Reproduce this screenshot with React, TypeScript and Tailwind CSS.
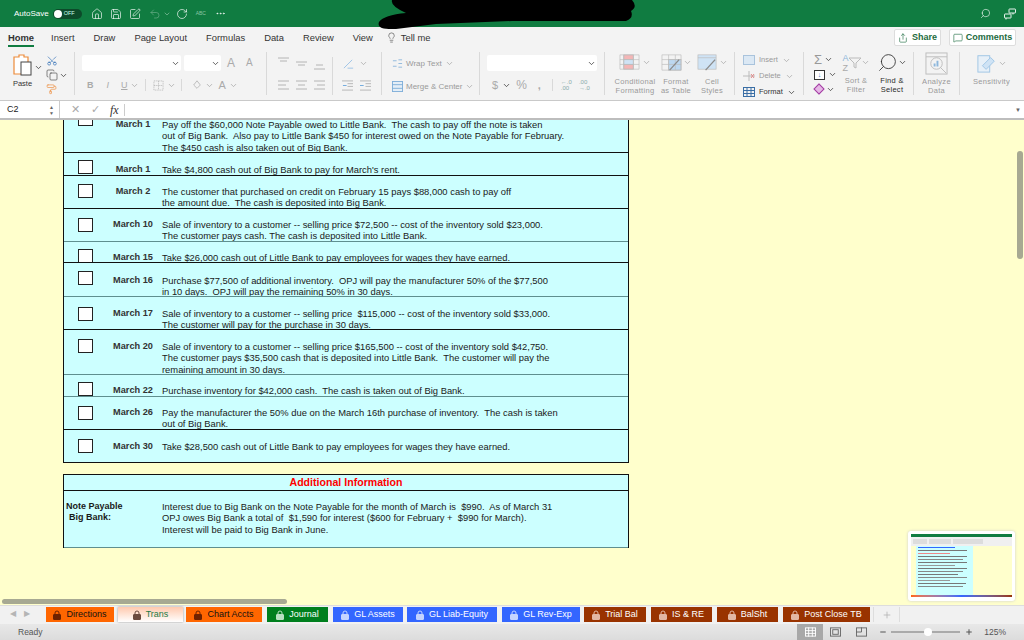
import {
    ChevronDown,
    Copy,
    Ellipsis,
    Home,
    Lightbulb,
    MessageSquare,
    Minus,
    PaintRoller,
    Plus,
    RotateCw,
    Save,
    Scissors,
    Search,
    Share,
    SquarePen,
    Undo2,
} from 'lucide-react';
import { ReactNode } from 'react';

const font = "font-['Liberation_Sans',Arial,sans-serif]";

type Row = {
    date: string;
    lines: string[];
    height: string;
    boxTop: string;
    textTop: string;
    rule: string;
};

const hard = 'border-[#111]';
const soft = 'border-[#5f8f8f]';

const rows: Row[] = [
    {
        date: 'March 1',
        lines: [
            'Pay off the $60,000 Note Payable owed to Little Bank.  The cash to pay off the note is taken',
            'out of Big Bank.  Also pay to Little Bank $450 for interest owed on the Note Payable for February.',
            'The $450 cash is also taken out of Big Bank.',
        ],
        height: 'h-[33px]',
        boxTop: 'mt-[-8px]',
        textTop: 'mt-[-1px]',
        rule: hard,
    },
    {
        date: 'March 1',
        lines: ["Take $4,800 cash out of Big Bank to pay for March's rent."],
        height: 'h-[23px]',
        boxTop: 'mt-[7px]',
        textTop: 'mt-[11px]',
        rule: hard,
    },
    {
        date: 'March 2',
        lines: [
            'The customer that purchased on credit on February 15 pays $88,000 cash to pay off',
            'the amount due.  The cash is deposited into Big Bank.',
        ],
        height: 'h-[33px]',
        boxTop: 'mt-[8px]',
        textTop: 'mt-[10px]',
        rule: hard,
    },
    {
        date: 'March 10',
        lines: [
            'Sale of inventory to a customer -- selling price $72,500 -- cost of the inventory sold $23,000.',
            'The customer pays cash. The cash is deposited into Little Bank.',
        ],
        height: 'h-[33px]',
        boxTop: 'mt-[9px]',
        textTop: 'mt-[10px]',
        rule: soft,
    },
    {
        date: 'March 15',
        lines: ['Take $26,000 cash out of Little Bank to pay employees for wages they have earned.'],
        height: 'h-[21px]',
        boxTop: 'mt-[7px]',
        textTop: 'mt-[10px]',
        rule: hard,
    },
    {
        date: 'March 16',
        lines: [
            'Purchase $77,500 of additional inventory.  OPJ will pay the manufacturer 50% of the $77,500',
            'in 10 days.  OPJ will pay the remaining 50% in 30 days.',
        ],
        height: 'h-[34px]',
        boxTop: 'mt-[8px]',
        textTop: 'mt-[12px]',
        rule: soft,
    },
    {
        date: 'March 17',
        lines: [
            'Sale of inventory to a customer -- selling price  $115,000 -- cost of the inventory sold $33,000.',
            'The customer will pay for the purchase in 30 days.',
        ],
        height: 'h-[33px]',
        boxTop: 'mt-[10px]',
        textTop: 'mt-[11px]',
        rule: hard,
    },
    {
        date: 'March 20',
        lines: [
            'Sale of inventory to a customer -- selling price $165,500 -- cost of the inventory sold $42,750.',
            'The customer pays $35,500 cash that is deposited into Little Bank.  The customer will pay the',
            'remaining amount in 30 days.',
        ],
        height: 'h-[45px]',
        boxTop: 'mt-[9px]',
        textTop: 'mt-[11px]',
        rule: soft,
    },
    {
        date: 'March 22',
        lines: ['Purchase inventory for $42,000 cash.  The cash is taken out of Big Bank.'],
        height: 'h-[22px]',
        boxTop: 'mt-[7px]',
        textTop: 'mt-[10px]',
        rule: soft,
    },
    {
        date: 'March 26',
        lines: [
            'Pay the manufacturer the 50% due on the March 16th purchase of inventory.  The cash is taken',
            'out of Big Bank.',
        ],
        height: 'h-[33px]',
        boxTop: 'mt-[9px]',
        textTop: 'mt-[10px]',
        rule: hard,
    },
    {
        date: 'March 30',
        lines: ['Take $28,500 cash out of Little Bank to pay employees for wages they have earned.'],
        height: 'h-[32px]',
        boxTop: 'mt-[9px]',
        textTop: 'mt-[11px]',
        rule: 'border-transparent',
    },
];

const tabs = [
    { name: 'Directions', width: 'w-[68px]', mr: 'mr-[4px]', cls: 'bg-[#ff6600] text-[#111]', lock: 'text-[#6e2200]' },
    { name: 'Trans', width: 'w-[65px]', mr: 'mr-[3px]', cls: 'bg-gradient-to-b from-[#ffc9ae] to-white text-[#1d7a45] shadow-[0_0_2px_#999]', lock: 'text-[#6b4a3e]' },
    { name: 'Chart Accts', width: 'w-[76px]', mr: 'mr-[5px]', cls: 'bg-[#ff6600] text-[#111]', lock: 'text-[#6e2200]' },
    { name: 'Journal', width: 'w-[61px]', mr: 'mr-[5px]', cls: 'bg-[#007f1e] text-white', lock: 'text-[#b9e0c2]' },
    { name: 'GL Assets', width: 'w-[70px]', mr: 'mr-[4px]', cls: 'bg-[#3366ff] text-white', lock: 'text-[#c4d3ff]' },
    { name: 'GL Liab-Equity', width: 'w-[90px]', mr: 'mr-[5px]', cls: 'bg-[#3366ff] text-white', lock: 'text-[#c4d3ff]' },
    { name: 'GL Rev-Exp', width: 'w-[78px]', mr: 'mr-[4px]', cls: 'bg-[#3366ff] text-white', lock: 'text-[#c4d3ff]' },
    { name: 'Trial Bal', width: 'w-[62px]', mr: 'mr-[5px]', cls: 'bg-[#993300] text-white', lock: 'text-[#e2b8a4]' },
    { name: 'IS & RE', width: 'w-[61px]', mr: 'mr-[5px]', cls: 'bg-[#993300] text-white', lock: 'text-[#e2b8a4]' },
    { name: 'BalSht', width: 'w-[61px]', mr: 'mr-[5px]', cls: 'bg-[#993300] text-white', lock: 'text-[#e2b8a4]' },
    { name: 'Post Close TB', width: 'w-[87px]', mr: 'mr-[3px]', cls: 'bg-[#993300] text-white', lock: 'text-[#e2b8a4]' },
];

const menu = ['Insert', 'Draw', 'Page Layout', 'Formulas', 'Data', 'Review', 'View'];

const overview = [
    'w-[70%] bg-[#3366ff]', 'w-[92%] bg-[#777]', 'w-[60%] bg-[#e88]', 'w-[92%] bg-[#777]', 'w-[85%] bg-[#888]',
    'w-[92%] bg-[#777]', 'w-[70%] bg-[#999]', 'w-[92%] bg-[#777]', 'w-[85%] bg-[#888]', 'w-[75%] bg-[#777]',
    'w-[92%] bg-[#888]', 'w-[60%] bg-[#999]', 'w-[90%] bg-[#777]', 'w-[85%] bg-[#888]',
];

function Caret({ dark = false, className = '' }: { dark?: boolean; className?: string }) {
    return (
        <ChevronDown
            className={`h-[9px] w-[9px] shrink-0 ${dark ? 'text-[#333]' : 'text-[#a5a5a5]'} ${className}`}
            strokeWidth={2}
        />
    );
}

function Lock({ className }: { className: string }) {
    return (
        <svg viewBox="0 0 8 10" className={`h-[10px] w-[8px] shrink-0 ${className}`} fill="none" stroke="currentColor">
            <path d="M2 5V3a2 2 0 0 1 4 0v2" />
            <rect x="0.5" y="4.5" width="7" height="5" rx="0.5" fill="currentColor" />
        </svg>
    );
}

function Lines({ align }: { align: 'left' | 'center' | 'right' | 'top' | 'middle' | 'bottom' }) {
    const paths: Record<string, string> = {
        left: 'M1 2h11M1 6h8M1 10h11',
        center: 'M1 2h11M3 6h7M1 10h11',
        right: 'M1 2h11M4 6h8M1 10h11',
        top: 'M1 1h11M3 4h7',
        middle: 'M1 5h11M3 8h7',
        bottom: 'M3 8h7M1 12h11',
    };
    return (
        <svg viewBox="0 0 13 13" className="h-[13px] w-[13px]" fill="none" stroke="#b4b4b4" strokeWidth="1">
            <path d={paths[align]} />
        </svg>
    );
}

function Label({ children, dark = false }: { children: ReactNode; dark?: boolean }) {
    return (
        <span className={`whitespace-nowrap text-center text-[7.5px] leading-[9px] tracking-[0.3px] ${dark ? 'text-[#2b2b2b]' : 'text-[#9a9a9a]'}`}>
            {children}
        </span>
    );
}

function Ribbon() {
    return (
        <div className="flex h-[49px] items-start pt-[1px]">
            {/* clipboard */}
            <div className="flex h-[43px] w-[75px] shrink-0 border-r border-[#d9d9d9] pt-[2px]">
                <div className="ml-[11px] flex w-[23px] flex-col items-center">
                    <svg viewBox="0 0 20 22" className="h-[22px] w-[20px]" fill="none">
                        <path d="M1 3h5V1h5v2h4v17H1z" fill="#fff" stroke="#ed8b3a" strokeWidth="1.2" />
                        <rect x="8" y="8" width="10" height="13" fill="#fff" stroke="#444" strokeWidth="1" />
                    </svg>
                    <span className="mt-[3px] text-[7.5px] leading-[9px] text-[#333]">Paste</span>
                </div>
                <Caret dark className="mt-[9px]" />
                <div className="ml-[3px] flex flex-col items-start gap-[3px] pt-[1px]">
                    <Scissors className="h-[12px] w-[12px] -rotate-90 text-[#2f6eb5]" strokeWidth={1.4} />
                    <div className="flex items-center gap-[1px]">
                        <Copy className="h-[12px] w-[12px] text-[#444]" strokeWidth={1.3} />
                        <Caret dark />
                    </div>
                    <PaintRoller className="h-[11px] w-[11px] text-[#ed8b3a]" strokeWidth={1.5} />
                </div>
            </div>
            {/* font */}
            <div className="flex h-[43px] w-[192px] shrink-0 flex-col gap-[8px] border-r border-[#d9d9d9] pl-[7px] pt-[3px]">
                <div className="flex items-center gap-[3px]">
                    <div className="flex h-[16px] w-[99px] items-center justify-end rounded-[2px] bg-white pr-[1px]">
                        <Caret dark />
                    </div>
                    <div className="flex h-[16px] w-[37px] items-center justify-end rounded-[2px] bg-white pr-[1px]">
                        <Caret dark />
                    </div>
                    <span className="ml-[3px] text-[12px] leading-none text-[#aaa]">A</span>
                    <span className="ml-[8px] text-[10px] leading-none text-[#aaa]">A</span>
                </div>
                <div className="flex items-center text-[9px] leading-none text-[#aaa]">
                    <span className="ml-[5px] font-bold">B</span>
                    <span className="ml-[13px] italic">I</span>
                    <span className="ml-[12px] underline">U</span>
                    <Caret className="ml-[2px]" />
                    <div className="ml-[6px] h-[12px] w-px bg-[#d9d9d9]" />
                    <svg viewBox="0 0 12 12" className="ml-[7px] h-[11px] w-[11px]" fill="none" stroke="#b4b4b4" strokeDasharray="1 1">
                        <rect x="1" y="1" width="10" height="10" />
                        <path d="M1 6h10M6 1v10" />
                    </svg>
                    <Caret className="ml-[3px]" />
                    <div className="ml-[5px] h-[12px] w-px bg-[#d9d9d9]" />
                    <svg viewBox="0 0 12 12" className="ml-[10px] h-[10px] w-[10px]" fill="none" stroke="#b4b4b4">
                        <path d="M6 1l4 5-4 4-4-4z" />
                    </svg>
                    <Caret className="ml-[3px]" />
                    <span className="ml-[5px] text-[11px]">A</span>
                    <Caret className="ml-[3px]" />
                </div>
            </div>
            {/* alignment */}
            <div className="flex h-[43px] w-[115px] shrink-0 border-r border-[#d9d9d9] pl-[10px] pt-[5px]">
                <div className="flex w-[56px] flex-col gap-[9px] border-r border-[#d9d9d9]">
                    <div className="flex gap-[5px]">
                        <Lines align="top" />
                        <Lines align="middle" />
                        <Lines align="bottom" />
                    </div>
                    <div className="flex gap-[5px]">
                        <Lines align="left" />
                        <Lines align="center" />
                        <Lines align="right" />
                    </div>
                </div>
                <div className="flex flex-col gap-[9px] pl-[9px]">
                    <div className="flex h-[13px] items-center gap-[4px]">
                        <svg viewBox="0 0 14 13" className="h-[12px] w-[13px]" fill="none" stroke="#9bc2e6">
                            <path d="M2 11L11 2M6 11h6" />
                        </svg>
                        <Caret />
                    </div>
                    <div className="flex gap-[7px]">
                        <svg viewBox="0 0 12 12" className="h-[13px] w-[11px]" fill="none" stroke="#b4b4b4">
                            <path d="M0 1h12M6 4h6M6 7h6M0 11h12" />
                            <path d="M5 6H1" stroke="#6aa6dc" />
                        </svg>
                        <svg viewBox="0 0 12 12" className="h-[13px] w-[11px]" fill="none" stroke="#b4b4b4">
                            <path d="M0 1h12M6 4h6M6 7h6M0 11h12" />
                            <path d="M0 6h4" stroke="#6aa6dc" />
                        </svg>
                    </div>
                </div>
            </div>
            {/* wrap */}
            <div className="flex h-[43px] w-[98px] shrink-0 flex-col gap-[12px] border-r border-[#d9d9d9] pl-[10px] pt-[6px] text-[8px] leading-none text-[#9a9a9a]">
                <div className="flex items-center gap-[3px]">
                    <svg viewBox="0 0 12 12" className="h-[11px] w-[11px]" fill="none" stroke="#8db7dc">
                        <path d="M1 3h4M1 9h4M7 2h4M7 6h4M7 10h4" />
                    </svg>
                    Wrap Text
                    <Caret />
                </div>
                <div className="flex items-center gap-[3px]">
                    <svg viewBox="0 0 12 12" className="h-[11px] w-[11px]" fill="#e4eef7" stroke="#7eaed8">
                        <rect x="0.5" y="0.5" width="11" height="11" />
                        <path d="M0 4h12M0 8h12" />
                    </svg>
                    Merge &amp; Center
                    <Caret />
                </div>
            </div>
            {/* number */}
            <div className="flex h-[43px] w-[125px] shrink-0 flex-col gap-[8px] border-r border-[#d9d9d9] pl-[7px] pt-[3px]">
                <div className="mr-[7px] flex h-[16px] items-center justify-end rounded-[2px] bg-white pr-[1px]">
                    <Caret dark />
                </div>
                <div className="flex items-center text-[11px] leading-none text-[#aaa]">
                    <span className="ml-[5px]">$</span>
                    <Caret dark className="ml-[4px]" />
                    <span className="ml-[5px] text-[12px]">%</span>
                    <span className="ml-[11px] font-bold">,</span>
                    <div className="ml-[11px] h-[12px] w-px bg-[#d9d9d9]" />
                    <span className="ml-[8px] text-[6px] leading-[6px] text-[#8aa]">
                        ←.0
                        <br />
                        .00
                    </span>
                    <span className="ml-[7px] text-[6px] leading-[6px] text-[#8aa]">
                        .00
                        <br />
                        →.0
                    </span>
                </div>
            </div>
            {/* styles */}
            <div className="flex h-[43px] w-[130px] shrink-0 border-r border-[#d9d9d9] pl-[8px] pt-[1px]">
                <div className="flex w-[44px] flex-col items-center gap-[5px]">
                    <div className="flex items-center gap-[2px]">
                        <svg viewBox="0 0 22 18" className="h-[19px] w-[21px]" fill="none" stroke="#bbb" strokeWidth="0.7">
                            <rect x="5" y="1" width="10" height="5" fill="#f4b6b6" />
                            <rect x="5" y="11" width="10" height="5" fill="#f4b6b6" />
                            <rect x="5" y="6" width="10" height="5" fill="#cfe3f5" />
                            <path d="M1 1h20v15H1zM1 6h20M1 11h20M5 1v15M15 1v15" />
                        </svg>
                        <Caret />
                    </div>
                    <Label>
                        Conditional
                        <br />
                        Formatting
                    </Label>
                </div>
                <div className="ml-[2px] flex w-[34px] flex-col items-center gap-[5px]">
                    <div className="flex items-center gap-[1px]">
                        <svg viewBox="0 0 22 18" className="h-[19px] w-[21px]" fill="none" stroke="#bbb" strokeWidth="0.7">
                            <rect x="8" y="6" width="13" height="11" fill="#bcd8f1" />
                            <path d="M1 1h20v16H1zM1 6h20M1 11h20M8 1v16M15 1v16" />
                            <path d="M9 17l10-11" stroke="#8a8a8a" strokeWidth="1.4" />
                        </svg>
                        <Caret />
                    </div>
                    <Label>
                        Format
                        <br />
                        as Table
                    </Label>
                </div>
                <div className="ml-[2px] flex w-[34px] flex-col items-center gap-[5px]">
                    <div className="flex items-center gap-[1px]">
                        <svg viewBox="0 0 22 18" className="h-[19px] w-[21px]" fill="none" stroke="#bbb" strokeWidth="0.7">
                            <rect x="1" y="1" width="19" height="15" fill="#cfe3f5" />
                            <path d="M1 4h19" />
                            <path d="M9 17l10-11" stroke="#8a8a8a" strokeWidth="1.4" />
                        </svg>
                        <Caret />
                    </div>
                    <Label>
                        Cell
                        <br />
                        Styles
                    </Label>
                </div>
            </div>
            {/* cells */}
            <div className="flex h-[43px] w-[69px] shrink-0 flex-col gap-[6px] border-r border-[#d9d9d9] pl-[8px] pt-[3px] text-[7.5px] leading-none">
                <div className="flex h-[10px] items-center gap-[4px] text-[#9a9a9a]">
                    <svg viewBox="0 0 12 10" className="h-[10px] w-[12px]" fill="#dbe8f4" stroke="#a9c3dc">
                        <rect x="0.5" y="0.5" width="11" height="9" />
                    </svg>
                    Insert
                    <Caret />
                </div>
                <div className="flex h-[10px] items-center gap-[4px] text-[#9a9a9a]">
                    <svg viewBox="0 0 12 10" className="h-[10px] w-[12px]" fill="none" stroke="#bbb">
                        <path d="M0 5h12M6 0v10" />
                        <path d="M8 3l3 4M11 3L8 7" stroke="#e08a8a" />
                    </svg>
                    Delete
                    <Caret />
                </div>
                <div className="flex h-[10px] items-center gap-[4px] text-[#333]">
                    <svg viewBox="0 0 12 10" className="h-[10px] w-[12px]" fill="none" stroke="#3a6ea5">
                        <rect x="0.5" y="0.5" width="11" height="9" />
                        <path d="M0 3.5h12M0 6.5h12M4 0v10M8 0v10" />
                    </svg>
                    Format
                    <Caret dark />
                </div>
            </div>
            {/* editing */}
            <div className="flex h-[43px] w-[110px] shrink-0 border-r border-[#d9d9d9] pl-[10px]">
                <div className="flex w-[26px] flex-col gap-[3px] pt-[1px]">
                    <div className="flex h-[13px] items-center gap-[2px] text-[13px] leading-none text-[#999]">
                        Σ
                        <Caret dark />
                    </div>
                    <div className="flex h-[13px] items-center gap-[3px]">
                        <span className="flex h-[10px] w-[11px] items-center justify-center border border-[#333] bg-white text-[7px] leading-none text-[#2f6eb5]">
                            ↓
                        </span>
                        <Caret dark />
                    </div>
                    <div className="flex h-[13px] items-center gap-[3px] pl-[1px]">
                        <span className="h-[8px] w-[8px] rotate-45 border border-[#a13ca1] bg-[#e6b7e6]" />
                        <Caret dark />
                    </div>
                </div>
                <div className="flex w-[32px] flex-col items-center gap-[3px]">
                    <div className="flex h-[21px] items-center">
                        <span className="flex flex-col text-[9px] leading-[10px] text-[#8fb6da]">
                            <span>A</span>
                            <span className="text-[#aaa]">Z</span>
                        </span>
                        <svg viewBox="0 0 12 12" className="h-[12px] w-[12px]" fill="none" stroke="#bbb">
                            <path d="M0 1h12L7 6v5L5 10V6z" />
                        </svg>
                        <Caret />
                    </div>
                    <Label>
                        Sort &amp;
                        <br />
                        Filter
                    </Label>
                </div>
                <div className="ml-[4px] flex w-[32px] flex-col items-center gap-[3px]">
                    <div className="flex h-[21px] items-center">
                        <Search className="h-[21px] w-[21px] -scale-x-100 text-[#333]" strokeWidth={1} />
                        <Caret dark />
                    </div>
                    <Label dark>
                        Find &amp;
                        <br />
                        Select
                    </Label>
                </div>
            </div>
            {/* analyze */}
            <div className="flex h-[43px] w-[46px] shrink-0 flex-col items-center gap-[2px] border-r border-[#d9d9d9]">
                <svg viewBox="0 0 24 24" className="h-[23px] w-[23px]" fill="none" stroke="#bdbdbd">
                    <rect x="1" y="1" width="22" height="22" />
                    <path d="M1 5h22" />
                    <circle cx="12" cy="12" r="6" />
                    <path d="M10 15v-3M13 15V9" stroke="#8db7dc" strokeWidth="2" />
                    <path d="M16 16l6 6" />
                </svg>
                <Label>
                    Analyze
                    <br />
                    Data
                </Label>
            </div>
            {/* sensitivity */}
            <div className="flex w-[63px] shrink-0 flex-col items-center gap-[3px]">
                <div className="flex items-center gap-[1px]">
                    <svg viewBox="0 0 22 22" className="h-[22px] w-[20px]" fill="none" stroke="#9cc3e4">
                        <rect x="1" y="3" width="13" height="18" fill="#e7f0f8" />
                        <path d="M6 14l9-9 4 4-9 9z" fill="#cfe3f5" />
                    </svg>
                    <Caret />
                </div>
                <Label>Sensitivity</Label>
            </div>
        </div>
    );
}

function SheetRow({ row }: { row: Row }) {
    return (
        <div className={`flex ${row.height} overflow-hidden border-b ${row.rule}`}>
            <div className={`${row.boxTop} ml-[14px] h-[14px] w-[15px] shrink-0 border border-[#222] bg-white`} />
            <div className={`${row.textTop} ml-[15px] w-[50px] shrink-0 text-center text-[9.2px] font-bold text-[#333]`}>{row.date}</div>
            <div className={`${row.textTop} pl-[4px]`}>
                {row.lines.map((line) => (
                    <div key={line} className="whitespace-pre">
                        {line}
                    </div>
                ))}
            </div>
        </div>
    );
}

export default function App() {
    return (
        <div className={`${font} relative flex h-[640px] w-[1024px] flex-col overflow-hidden bg-[#ffffcc] text-[#1a1a1a]`}>
            {/* title bar */}
            <div className="flex h-[27px] shrink-0 items-center bg-[#107c41] pl-[14px] pr-[8px] text-white">
                <span className="text-[8px] leading-none">AutoSave</span>
                <div className="ml-[4px] flex h-[10px] w-[29px] items-center rounded-full bg-[#0d4a2a] pl-[1px]">
                    <span className="h-[8px] w-[8px] rounded-full bg-white" />
                    <span className="ml-[2px] text-[5.5px] leading-none text-[#cfe]">OFF</span>
                </div>
                <Home className="ml-[9px] h-[12px] w-[12px]" strokeWidth={1.3} />
                <Save className="ml-[7px] h-[12px] w-[12px]" strokeWidth={1.3} />
                <SquarePen className="ml-[7px] h-[12px] w-[12px]" strokeWidth={1.3} />
                <Undo2 className="ml-[8px] h-[12px] w-[12px] text-[#6fb08c]" strokeWidth={1.3} />
                <ChevronDown className="ml-[2px] h-[8px] w-[8px] text-[#8cc4a5]" />
                <RotateCw className="ml-[5px] h-[12px] w-[12px]" strokeWidth={1.3} />
                <span className="ml-[8px] text-[5px] leading-none text-[#8cc4a5]">ABC</span>
                <Ellipsis className="ml-[9px] h-[11px] w-[11px]" strokeWidth={1.5} />
                <Search className="ml-auto h-[11px] w-[11px] -scale-x-100" strokeWidth={1.3} />
                <svg viewBox="0 0 12 12" className="ml-[13px] h-[12px] w-[12px]" fill="none" stroke="currentColor" strokeWidth="0.9">
                    <rect x="5" y="1" width="6.5" height="4" rx="0.5" />
                    <rect x="0.5" y="6" width="6.5" height="4" rx="0.5" />
                    <path d="M2 10v1.5M9 5v1.5" />
                </svg>
            </div>

            {/* ribbon tabs */}
            <div className="flex h-[24px] shrink-0 items-center justify-between bg-[#f3f3f3] pb-[3px] pl-[8px] pr-[8px] text-[9.4px] leading-none text-[#333]">
                <div className="flex items-center">
                    <span className="relative font-bold">
                        Home
                        <span className="absolute left-0 right-0 top-[12px] h-[2px] bg-[#107c41]" />
                    </span>
                    <div className="ml-[17px] flex gap-[19px]">
                        {menu.map((item) => (
                            <span key={item}>{item}</span>
                        ))}
                    </div>
                    <Lightbulb className="ml-[13px] h-[11px] w-[11px]" strokeWidth={1.2} />
                    <span className="ml-[4px]">Tell me</span>
                </div>
                <div className="flex gap-[8px]">
                    <span className="flex h-[17px] w-[47px] items-center justify-center gap-[4px] rounded-[2px] border border-[#ddd] bg-white text-[9px] font-bold text-[#1d6b40]">
                        <Share className="h-[10px] w-[10px]" strokeWidth={1.5} />
                        Share
                    </span>
                    <span className="flex h-[17px] w-[67px] items-center justify-center gap-[3px] rounded-[2px] border border-[#ddd] bg-white text-[9px] font-bold text-[#1d6b40]">
                        <MessageSquare className="h-[10px] w-[10px]" strokeWidth={1.5} />
                        Comments
                    </span>
                </div>
            </div>

            <div className="shrink-0 border-b border-[#c9c9c9] bg-[#f3f3f3]">
                <Ribbon />
            </div>

            {/* formula bar */}
            <div className="flex h-[19px] shrink-0 items-center border-b-2 border-[#bdbdbd] bg-white text-[9px] leading-none">
                <div className="flex h-full w-[60px] items-center justify-between border-r border-[#ccc] pl-[7px] pr-[5px]">
                    C2
                    <span className="flex flex-col text-[5px] leading-[6px] text-[#666]">
                        <span>▲</span>
                        <span>▼</span>
                    </span>
                </div>
                <span className="ml-[11px] text-[11px] text-[#aaa]">✕</span>
                <span className="ml-[11px] text-[11px] text-[#aaa]">✓</span>
                <span className="ml-[10px] font-['Liberation_Serif',serif] text-[12px] italic text-[#333]">fx</span>
                <span className="ml-[5px] h-[12px] w-px bg-[#ccc]" />
                <span className="ml-auto mr-[3px] text-[6px] text-[#666]">▼</span>
            </div>

            {/* sheet */}
            <div className="relative min-h-0 flex-1 overflow-hidden">
                <div className="ml-[63px] w-[566px] text-[9.4px] leading-[11.4px]">
                    <div className="border-x border-b border-[#111] bg-[#ccffff]">
                        {rows.map((row, i) => (
                            <SheetRow key={row.date + i} row={row} />
                        ))}
                    </div>
                    <div className="mt-[11px] border-x border-t border-[#111] bg-[#ccffff]">
                        <div className="h-[16px] border-b border-[#111] text-center text-[10.6px] font-bold leading-[15px] text-[#ff0000]">
                            Additional Information
                        </div>
                        <div className="flex h-[57px] border-b border-[#5f8f8f] pt-[10px]">
                            <div className="w-[98px] shrink-0 pl-[2px] text-[9px] font-bold">
                                Note Payable
                                <div className="pl-[3px]">Big Bank:</div>
                            </div>
                            <div className="whitespace-pre">
                                <div>Interest due to Big Bank on the Note Payable for the month of March is  $990.  As of March 31</div>
                                <div>OPJ owes Big Bank a total of  $1,590 for interest ($600 for February +  $990 for March).</div>
                                <div>Interest will be paid to Big Bank in June.</div>
                            </div>
                        </div>
                    </div>
                </div>

                {/* scrollbars and sheet overview float over the grid */}
                <div className="absolute right-[1px] top-[31px] h-[108px] w-[6px] rounded-full bg-[#a7a992]" />
                <div className="absolute bottom-[1px] left-[2px] h-[5px] w-[285px] rounded-full bg-[#a7a992]" />
                <div className="absolute bottom-[4px] right-[9px] flex h-[70px] w-[107px] flex-col rounded-[3px] bg-white px-[3px] pb-[4px] pt-[3px] shadow-[0_0_3px_#ccc]">
                    <div className="h-[3px] shrink-0 bg-[#107c41]" />
                    <div className="flex h-[9px] shrink-0 items-center gap-[2px] bg-[#f0f0f0] px-[2px]">
                        <div className="h-[5px] w-[14px] bg-[#ddd]" />
                        <div className="h-[5px] w-[22px] bg-[#ddd]" />
                        <div className="h-[5px] w-[30px] bg-[#ddd]" />
                    </div>
                    <div className="flex min-h-0 flex-1 bg-[#ffffcc] pl-[5px] pr-[39px]">
                        <div className="flex w-full flex-col gap-[2px] overflow-hidden bg-[#ccffff] px-[2px] pt-[1px]">
                            {overview.map((line, i) => (
                                <div key={i} className={`h-px shrink-0 ${line}`} />
                            ))}
                        </div>
                    </div>
                    <div className="h-[2px] shrink-0 bg-gradient-to-r from-[#ff6600] via-[#3366ff] to-[#993300]" />
                </div>
            </div>

            {/* sheet tabs */}
            <div className="flex h-[19px] shrink-0 items-start border-t border-[#ddd] bg-[#f1f1f1] pl-[10px] pt-[1px] text-[9px] leading-none">
                <span className="mt-[3px] w-[14px] text-[8px] text-[#b5b5b5]">◀</span>
                <span className="mt-[3px] w-[22px] text-[8px] text-[#b5b5b5]">▶</span>
                {tabs.map((tab) => (
                    <div key={tab.name} className={`flex h-[15px] ${tab.width} ${tab.mr} items-center justify-center gap-[5px] ${tab.cls}`}>
                        <Lock className={tab.lock} />
                        {tab.name}
                    </div>
                ))}
                <div className="flex h-[15px] w-[27px] items-center justify-center border-x border-[#ddd]">
                    <Plus className="h-[10px] w-[10px] text-[#b5b5b5]" strokeWidth={2} />
                </div>
            </div>

            {/* status bar */}
            <div className="flex h-[16px] shrink-0 items-center bg-gradient-to-b from-[#e8e8e8] to-[#dcdcdc] pl-[18px] text-[8.5px] leading-none text-[#555]">
                <span>Ready</span>
                <div className="ml-auto flex h-full w-[26px] items-center justify-center bg-[#a8a8a8]">
                    <svg viewBox="0 0 12 10" className="h-[10px] w-[11px]" fill="none" stroke="#fff">
                        <rect x="0.5" y="0.5" width="11" height="9" />
                        <path d="M0 3.5h12M0 6.5h12M4 0v10M8 0v10" />
                    </svg>
                </div>
                <svg viewBox="0 0 12 10" className="ml-[7px] h-[10px] w-[11px]" fill="none" stroke="#666">
                    <rect x="0.5" y="0.5" width="11" height="9" />
                    <rect x="3" y="2.5" width="6" height="5" />
                </svg>
                <svg viewBox="0 0 12 10" className="ml-[15px] h-[10px] w-[11px]" fill="none" stroke="#666">
                    <rect x="0.5" y="0.5" width="11" height="9" />
                    <path d="M6 0v5H0" />
                </svg>
                <Minus className="ml-[12px] h-[8px] w-[8px] text-[#555]" strokeWidth={3} />
                <div className="relative ml-[4px] h-[2px] w-[69px] bg-[#aaa]">
                    <span className="absolute left-[33px] top-[-3px] h-[8px] w-[8px] rounded-full bg-white" />
                </div>
                <Plus className="ml-[5px] h-[8px] w-[8px] text-[#555]" strokeWidth={3} />
                <span className="ml-[11px] mr-[18px]">125%</span>
            </div>

            {/* redaction scribble over the title bar */}
            <svg viewBox="0 0 260 30" className="absolute left-[376px] top-0 h-[30px] w-[260px]" fill="#000">
                <path d="M16 0 H256 Q262 7 255 11 Q258 18 250 21 L136 21 L60 24 L20 29 Q0 30 3 22 Q8 15 30 13 Q14 6 16 0 Z" />
            </svg>
        </div>
    );
}
